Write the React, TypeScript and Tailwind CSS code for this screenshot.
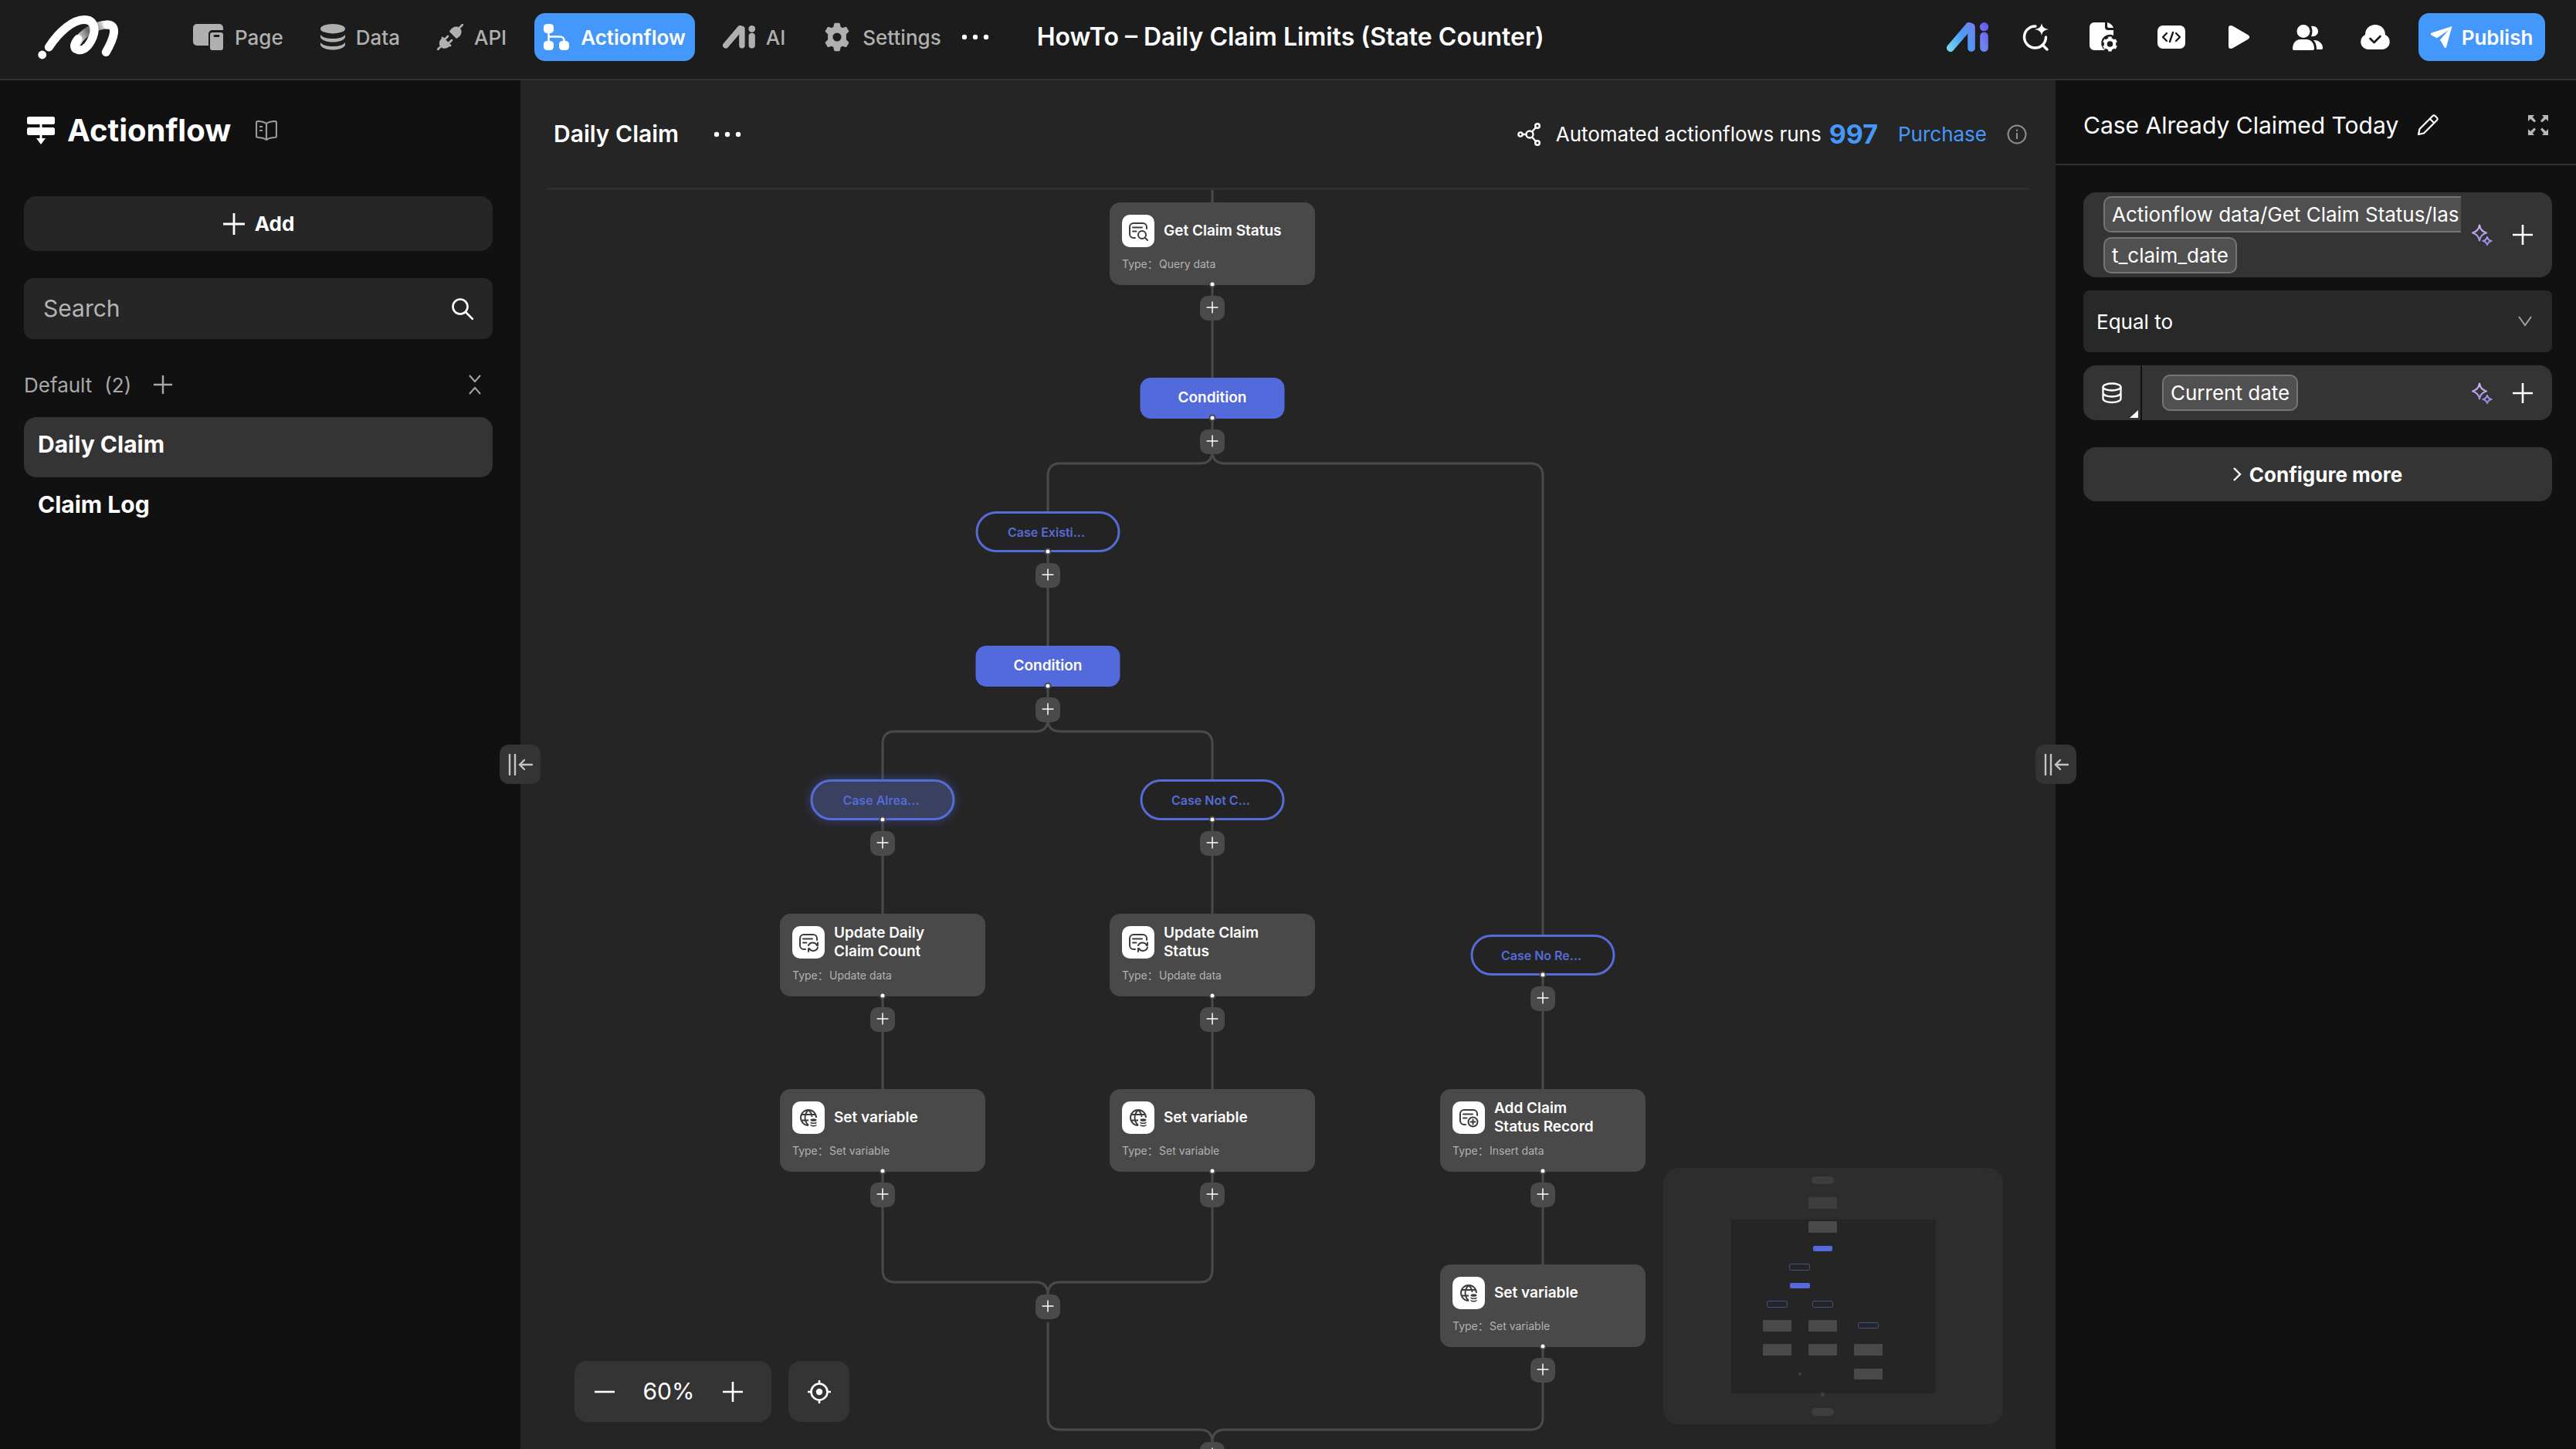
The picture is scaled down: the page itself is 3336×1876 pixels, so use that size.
import type { ReactNode } from "react";

type IconProps = { className?: string };

/* ---------- shared icons ---------- */

function Plus({ className = "size-7" }: IconProps) {
  return (
    <svg viewBox="0 0 28 28" className={className} fill="none" stroke="currentColor" strokeWidth="2.6">
      <path d="M14 1v26M1 14h26" />
    </svg>
  );
}

function Minus({ className = "size-7" }: IconProps) {
  return (
    <svg viewBox="0 0 28 28" className={className} fill="none" stroke="currentColor" strokeWidth="2.6">
      <path d="M1 14h26" />
    </svg>
  );
}

function Dots({ className = "w-9" }: IconProps) {
  return (
    <svg viewBox="0 0 36 8" className={className} fill="currentColor">
      <circle cx="4" cy="4" r="3.2" />
      <circle cx="18" cy="4" r="3.2" />
      <circle cx="32" cy="4" r="3.2" />
    </svg>
  );
}

function Logo() {
  return (
    <svg viewBox="0 0 105 57" className="h-[57px] w-[105px]" fill="none" strokeWidth="11" strokeLinecap="round">
      <defs>
        <linearGradient id="fold" x1="50" y1="36" x2="90" y2="12" gradientUnits="userSpaceOnUse">
          <stop offset="0" stopColor="#fff" />
          <stop offset="0.45" stopColor="#6b6b6b" />
          <stop offset="0.7" stopColor="#8d8d8d" />
          <stop offset="1" stopColor="#fff" />
        </linearGradient>
      </defs>
      <circle cx="5.7" cy="51" r="5.4" fill="#fff" />
      <path d="M50 36C58 22 76 12 90 12" stroke="url(#fold)" />
      <path d="M90 12c14 0 9 17-1.7 35.5" stroke="#fff" />
      <path d="M14.3 41C28 20 46 5.5 60 5.5c14 0 15 13 11 23-5 12-12 17.5-19 16-7-2-5-8 0-14" stroke="#fff" />
    </svg>
  );
}

function PageIcon() {
  return (
    <svg viewBox="0 0 40 34" className="w-10" fill="currentColor">
      <path d="M5 0h29a5 5 0 0 1 5 5v3H25a5 5 0 0 0-5 5v15H5a5 5 0 0 1-5-5V5a5 5 0 0 1 5-5Z" />
      <path
        fillRule="evenodd"
        d="M25 11h11a3 3 0 0 1 3 3v17a3 3 0 0 1-3 3H25a3 3 0 0 1-3-3V14a3 3 0 0 1 3-3Zm3 3a1.5 1.5 0 0 0 0 3h5a1.5 1.5 0 0 0 0-3Z"
      />
    </svg>
  );
}

function DataIcon() {
  return (
    <svg viewBox="0 0 32 34" className="w-8" fill="currentColor">
      <ellipse cx="16" cy="6.2" rx="16" ry="6.2" />
      <path d="M0 14c2 3 8 5 16 5s14-2 16-5v3c-1 4-8 6.5-16 6.5S1 21 0 17Z" />
      <path d="M0 24c2 3 8 5 16 5s14-2 16-5v3c-1 4-8 6.5-16 6.5S1 31 0 27Z" />
    </svg>
  );
}

function PlugIcon() {
  return (
    <svg viewBox="0 0 34 34" className="w-[34px]" fill="currentColor">
      <path d="M17 8c3-4 8-6 12-3s3 9-1 12l-3 2-9-9Z" />
      <path d="m29 5 4-4" stroke="currentColor" strokeWidth="2.5" strokeLinecap="round" />
      <path d="m6 17 11 11c-3 4-9 5-12 2s-3-8 1-11Z" />
      <path d="m7 18 10 10M10 20l4-4M15 25l4-4M4 30l-3 3" stroke="currentColor" strokeWidth="2.8" strokeLinecap="round" />
    </svg>
  );
}

function FlowIcon() {
  return (
    <svg viewBox="0 0 34 34" className="w-[34px]" fill="currentColor">
      <rect x="0" y="0" width="13" height="12" rx="4.5" />
      <rect x="0" y="22" width="13" height="12" rx="4.5" />
      <rect x="20" y="22" width="13" height="12" rx="4.5" />
      <path d="M6.5 11v12M6.5 16.5h15a5 5 0 0 1 5 5V23" fill="none" stroke="currentColor" strokeWidth="2.6" />
    </svg>
  );
}

function AiMark({ className = "w-[42px]", color = "currentColor" }: IconProps & { color?: string }) {
  return (
    <svg viewBox="0 0 54 38" className={className}>
      <defs>
        <linearGradient id="aiGradient" x1="0" y1="38" x2="54" y2="10" gradientUnits="userSpaceOnUse">
          <stop offset="0" stopColor="#7fe0f7" />
          <stop offset="0.45" stopColor="#4b9bf5" />
          <stop offset="0.75" stopColor="#6f83f0" />
          <stop offset="1" stopColor="#6a5cf0" />
        </linearGradient>
      </defs>
      {/* drawn as filled outlines so the gradient also reaches the straight bars */}
      <g fill={color}>
        <path d="M24.7 2.4a5 5 0 0 1 8.6 5.2L9.300 35.600a5 5 0 0 1-8.600-5.200Z" />
        <rect x="27.200" y="1" width="9.600" height="37" rx="4.800" />
        <rect x="43.200" y="12.500" width="10.600" height="25.500" rx="5.300" />
        <circle cx="48.500" cy="5.700" r="5.600" />
      </g>
    </svg>
  );
}

function GearIcon({ className = "w-[38px]" }: IconProps) {
  return (
    <svg viewBox="0 0 24 24" className={className} fill="currentColor">
      <path
        fillRule="evenodd"
        d="M10.2 1h3.600l.8 3 1.700 1 3-.9 1.900 3.200-2.200 2.200v4.800l2.200 2.300-1.900 3.200-3-.9-1.700 1-.8 3.100h-3.600l-.8-3.100-1.700-1-3 .9-1.900-3.200L5 14.300V9.500L2.800 7.300l1.900-3.200 3 .9 1.700-1ZM12 8a4 4 0 1 0 0 8 4 4 0 0 0 0-8Z"
        stroke="currentColor"
        strokeWidth="1"
        strokeLinejoin="round"
      />
    </svg>
  );
}

function SearchSparkIcon() {
  return (
    <svg viewBox="0 0 36 36" className="w-9" fill="none" stroke="currentColor" strokeWidth="3.4" strokeLinecap="round">
      <path d="M18 4a14 14 0 1 0 13.500 14M27 28l6 6" />
      <path d="M26 0c1 5 3 7 9 8-6 1-8 3-9 8-1-5-3-7-9-8 6-1 8-3 9-8Z" fill="currentColor" stroke="none" />
    </svg>
  );
}

function DocGearIcon() {
  return (
    <svg viewBox="0 0 36 38" className="w-9" fill="currentColor">
      <path d="M6 0h14v6a4 4 0 0 0 4 4h7v7a11 11 0 0 0-11 19H6a6 6 0 0 1-6-6V6a6 6 0 0 1 6-6Z" />
      <path d="M23 0c4 1 7 4 8 7h-6a2 2 0 0 1-2-2Z" />
      <circle cx="26.5" cy="28" r="5.8" fill="none" stroke="currentColor" strokeWidth="4" />
      <g stroke="currentColor" strokeWidth="4.5">
        <path d="M26.5 18.500v4M26.500 33.500v4M18.300 23.200l3.400 2M31.300 30.800l3.400 2M34.700 23.200l-3.400 2M21.700 30.800l-3.400 2" />
      </g>
    </svg>
  );
}

function CodeIcon() {
  return (
    <svg viewBox="0 0 36 30" className="w-9">
      <rect width="36" height="30" rx="7" fill="currentColor" />
      <path
        d="m12 10-5 5 5 5M24 10l5 5-5 5M20 9l-4 12"
        fill="none"
        stroke="#1c1c1c"
        strokeWidth="2.4"
        strokeLinecap="round"
        strokeLinejoin="round"
      />
    </svg>
  );
}

function PlayIcon() {
  return (
    <svg viewBox="0 0 28 32" className="w-7" fill="currentColor">
      <path d="M0 4c0-3 3-4 6-2l19 11c3 2 3 4 0 6L6 30c-3 2-6 1-6-2Z" />
    </svg>
  );
}

function UsersIcon() {
  return (
    <svg viewBox="0 0 39 33" className="w-[39px]" fill="currentColor">
      <circle cx="14" cy="8.5" r="8.5" />
      <path d="M0 31c0-7 4-12 10-12h8c6 0 10 5 10 12 0 1.500-1 2-2 2H2c-1 0-2-.5-2-2Z" />
      <path d="M24 2c5-1 9 2 9 6.500S29 16 24 15c2-4 2-9 0-13ZM27 20c8 0 12 5 12 10 0 2-1 2-2 2h-6c0-5-1-9-4-12Z" />
    </svg>
  );
}

function CloudIcon() {
  return (
    <svg viewBox="0 0 40 32" className="w-10">
      <path d="M10 32A10 10 0 0 1 7 13C7 5 13 0 20 0s13 5 13 13a10 10 0 0 1-3 19Z" fill="currentColor" />
      <path d="m13.5 18 5 5 8-8" fill="none" stroke="#1c1c1c" strokeWidth="2.6" strokeLinecap="round" strokeLinejoin="round" />
    </svg>
  );
}

function SendIcon() {
  return (
    <svg viewBox="0 0 28 28" className="w-7" fill="currentColor">
      <path d="M27.5 0 1 8.500c-1.500.6-1.400 2.500 0 3.200l7 3.600L23 5 12 17.500l5.500 9.700c.8 1.300 2.300 1 2.700-.4Z" />
    </svg>
  );
}

function StackFlowIcon() {
  return (
    <svg viewBox="0 0 36 36" className="w-9" fill="currentColor">
      <rect width="36" height="10" rx="2.5" />
      <rect y="14" width="36" height="10" rx="2.5" />
      <path d="M16.5 8h3v20h4.500l-6 8-6-8h4.500Z" />
    </svg>
  );
}

function BookIcon() {
  return (
    <svg viewBox="0 0 28 26" className="w-7" fill="none" stroke="currentColor" strokeWidth="2.2" strokeLinejoin="round">
      <path d="M14 4v21M14 4C11 2 7 1 3 1c-1 0-2 1-2 2v17c0 1 1 2 2 2 4 0 8 1 11 3 3-2 7-3 11-3 1 0 2-1 2-2V3c0-1-1-2-2-2-4 0-8 1-11 3ZM5 8h4M5 13h4" />
    </svg>
  );
}

function SearchIcon() {
  return (
    <svg viewBox="0 0 28 28" className="w-7" fill="none" stroke="currentColor" strokeWidth="2.6" strokeLinecap="round">
      <circle cx="11" cy="11" r="9.5" />
      <path d="m18 18 9 9" />
    </svg>
  );
}

function CollapseIcon() {
  return (
    <svg viewBox="0 0 16 26" className="w-4" fill="none" stroke="currentColor" strokeWidth="2">
      <path d="m1 1 7 8 7-8M1 25l7-8 7 8" />
    </svg>
  );
}

function BranchIcon() {
  return (
    <svg viewBox="0 0 30 30" className="w-[30px]" fill="none" stroke="currentColor" strokeWidth="2.4">
      <circle cx="4" cy="15" r="2.6" />
      <circle cx="16" cy="15" r="4.5" />
      <circle cx="26" cy="4" r="2.8" />
      <circle cx="26" cy="26" r="2.8" />
      <path d="M6.5 15h5M19 11.500l5-5.500M19 18.500l5 5.500" />
    </svg>
  );
}

function InfoIcon() {
  return (
    <svg viewBox="0 0 26 26" className="w-[26px] text-[#8f8f8f]" fill="none" stroke="currentColor" strokeWidth="2">
      <circle cx="13" cy="13" r="11.5" />
      <path d="M13 11v8M13 6.500v2.500" />
    </svg>
  );
}

function PencilIcon() {
  return (
    <svg viewBox="0 0 28 28" className="w-7" fill="none" stroke="currentColor" strokeWidth="2.2" strokeLinejoin="round">
      <path d="m2 26 1.500-7L20 2.500c1.500-1.500 3-1.500 4 0l1.500 1.500c1.500 1.300 1.500 2.700 0 4L9 24.500ZM17 6l5 5" />
    </svg>
  );
}

function ExpandIcon() {
  return (
    <svg viewBox="0 0 26 26" className="w-[26px]" fill="currentColor">
      <path d="M0 0h8L5.800 2.400 10 7.500 8 9.400 3 5 0 8ZM26 0v8l-3-3-5 4.400-2-1.900 4.200-5.100L18 0ZM0 26v-8l3 3 5-4.400 2 1.900-4.200 5.100L8 26ZM26 26h-8l2.200-2.400-4.200-5.100 2-1.900 5 4.400 3-3Z" />
    </svg>
  );
}

function SparklesIcon() {
  return (
    <svg viewBox="0 0 28 28" className="w-7" fill="none" stroke="url(#sparkle)" strokeWidth="2.1" strokeLinejoin="round">
      <defs>
        <linearGradient id="sparkle" x1="0" y1="0" x2="0" y2="28" gradientUnits="userSpaceOnUse">
          <stop offset="0" stopColor="#d3b8f0" />
          <stop offset="1" stopColor="#8f86e0" />
        </linearGradient>
      </defs>
      <path d="M11 1.500c1 6 3.500 8.500 9 10-5.500 1.500-8 4-9 10-1-6-3.500-8.500-9-10 5.500-1.500 8-4 9-10Z" />
      <path d="M21 17c.8 3 2.200 4.200 5.500 5-3.300.8-4.700 2-5.500 5-.8-3-2.200-4.200-5.500-5 3.300-.8 4.700-2 5.500-5Z" />
    </svg>
  );
}

function DatabaseIcon() {
  return (
    <svg viewBox="0 0 26 28" className="w-[26px]" fill="none" stroke="currentColor" strokeWidth="2.3">
      <ellipse cx="13" cy="6" rx="11.5" ry="4.5" />
      <path d="M1.5 6v15c0 3 5 5 11.500 5s11.500-2 11.500-5V6M1.500 13.500c0 3 5 5 11.500 5s11.500-2 11.500-5" />
    </svg>
  );
}

function TargetIcon() {
  return (
    <svg viewBox="0 0 32 32" className="w-8" fill="none" stroke="currentColor" strokeWidth="2.6">
      <circle cx="16" cy="16" r="10.5" />
      <circle cx="16" cy="16" r="4.2" fill="currentColor" stroke="none" />
      <path d="M16 1v5M16 26v5M1 16h5M26 16h5" />
    </svg>
  );
}

/* ---------- node icons ---------- */

type NodeIcon = "query" | "update" | "insert" | "variable";

function NodeGlyph({ kind }: { kind: NodeIcon }) {
  if (kind === "variable") {
    return (
      <svg viewBox="0 0 24 24" className="size-6" fill="none" stroke="#3c3c3c" strokeWidth="1.9">
        <path d="M22 12A10 10 0 1 0 12 22M3.500 8h17M3.500 15.500H12M12 2c-3 3-4.500 6-4.500 10S9 19 12 22M12 2c3 3 4.500 6 4.500 9" />
        <g fill="#3c3c3c" stroke="none">
          <ellipse cx="18.5" cy="15" rx="4" ry="1.8" />
          <path d="M14.5 17.300c2 1.600 6 1.600 8 0v1.600c-2 1.600-6 1.600-8 0ZM14.500 20.700c2 1.600 6 1.600 8 0v1.600c-2 1.600-6 1.600-8 0Z" />
        </g>
      </svg>
    );
  }
  return (
    <svg viewBox="0 0 26 26" className="size-[26px]" fill="none" stroke="#3c3c3c" strokeWidth="2" strokeLinecap="round">
      <path d="M9 22H7a5 5 0 0 1-5-5V8a5 5 0 0 1 5-5h12a5 5 0 0 1 5 5v2M6 8.500h12M6 13.500h4.500" />
      {kind === "query" && (
        <>
          <circle cx="18" cy="18" r="5" />
          <path d="m22 22 3 3" />
        </>
      )}
      {kind === "update" && <path d="M13 17a6 6 0 0 1 11 0M25 19.500a6 6 0 0 1-11 1.500M25 13.500V17M13 25v-4" />}
      {kind === "insert" && (
        <>
          <circle cx="18.5" cy="18.5" r="6" />
          <path d="M18.5 15.500v6M15.500 18.500h6" />
        </>
      )}
    </svg>
  );
}

/* ---------- header ---------- */

const navItems = [
  { label: "Page", icon: <PageIcon /> },
  { label: "Data", icon: <DataIcon /> },
  { label: "API", icon: <PlugIcon /> },
  { label: "Actionflow", icon: <FlowIcon />, active: true },
  { label: "AI", icon: <AiMark /> },
  { label: "Settings", icon: <GearIcon /> },
];

const toolbar = [
  { label: "AI assistant", icon: <AiMark className="w-[54px]" color="url(#aiGradient)" /> },
  { label: "Smart search", icon: <SearchSparkIcon /> },
  { label: "Page settings", icon: <DocGearIcon /> },
  { label: "Code", icon: <CodeIcon /> },
  { label: "Preview", icon: <PlayIcon /> },
  { label: "Members", icon: <UsersIcon /> },
  { label: "Saved", icon: <CloudIcon /> },
];

function Header() {
  return (
    <header className="flex h-[104px] shrink-0 items-center border-b-2 border-[#303030] bg-[#1c1c1c] pr-10 pb-1.5 pl-[49px]">
      <Logo />
      <nav className="ml-[84px] flex items-center gap-6">
        {navItems.map((item) => (
          <button
            key={item.label}
            className={
              item.active
                ? "flex h-[62px] items-center gap-3.5 rounded-[14px] bg-[#4598fb] px-3 text-[26px] font-semibold text-white"
                : "flex h-[62px] items-center gap-3.5 px-3 text-[26px] font-medium text-[#b0b0b0]"
            }
          >
            {item.icon}
            {item.label}
          </button>
        ))}
      </nav>
      <button aria-label="More" className="ml-3.5 text-white">
        <Dots />
      </button>
      <h1 className="ml-[62px] text-[32px] font-semibold whitespace-nowrap text-white">
        HowTo – Daily Claim Limits (State Counter)
      </h1>
      <div className="ml-auto flex items-center text-white">
        {toolbar.map((tool) => (
          <button key={tool.label} aria-label={tool.label} className="flex w-[88px] items-center justify-center">
            {tool.icon}
          </button>
        ))}
        <button className="ml-3 flex h-[62px] w-[164px] items-center justify-center gap-3 rounded-[14px] bg-[#4598fb] text-[26px] font-semibold">
          <SendIcon />
          Publish
        </button>
      </div>
    </header>
  );
}

/* ---------- left panel ---------- */

const flows = [
  { name: "Daily Claim", selected: true },
  { name: "Claim Log", selected: false },
];

function Sidebar() {
  return (
    <aside className="w-[674px] shrink-0 bg-[#111111] pr-9 pl-[31px] text-white">
      <div className="flex h-[130px] items-center pl-1">
        <StackFlowIcon />
        <h2 className="ml-4 text-[40px] font-bold">Actionflow</h2>
        <button aria-label="Documentation" className="ml-8 text-[#9a9a9a]">
          <BookIcon />
        </button>
      </div>

      <button className="mt-5 flex h-[71px] w-full items-center justify-center gap-3 rounded-2xl bg-[#262626] text-[26px] font-bold">
        <Plus className="size-[30px]" />
        Add
      </button>

      <label className="mt-[35px] flex h-[79px] items-center rounded-xl bg-[#262626] px-[25px]">
        <input
          type="text"
          aria-label="Search"
          placeholder="Search"
          className="min-w-0 flex-1 bg-transparent text-[30px] placeholder-[#b4b4b4] outline-none"
        />
        <SearchIcon />
      </label>

      <div className="mt-9 flex h-[46px] items-center text-[26px] text-[#a8a8a8]">
        <span>Default</span>
        <span className="ml-4">(2)</span>
        <button aria-label="Add to group" className="ml-7">
          <Plus className="size-[26px]" />
        </button>
        <button aria-label="Collapse group" className="mr-[15px] ml-auto">
          <CollapseIcon />
        </button>
      </div>

      <ul className="mt-[19px]">
        {flows.map((flow) => (
          <li key={flow.name}>
            <button
              className={
                flow.selected
                  ? "flex h-[78px] w-full items-center rounded-2xl bg-[#343434] px-[18px] pb-2 text-[30px] font-bold"
                  : "flex h-[78px] w-full items-center px-[18px] pb-2 text-[30px] font-bold"
              }
            >
              {flow.name}
            </button>
          </li>
        ))}
      </ul>
    </aside>
  );
}

function PanelHandle({ label, className }: { label: string; className: string }) {
  return (
    <button
      aria-label={label}
      className={`absolute top-[860px] z-10 flex h-[51px] w-[53px] items-center justify-center rounded-xl bg-[#343434] text-[#c4c4c4] ${className}`}
    >
      <svg viewBox="0 0 32 28" className="w-8" fill="none" stroke="currentColor" strokeWidth="2.4" strokeLinecap="round">
        <path d="M2 1v26M9 1v26M31 14H16M21 8l-6 6 6 6" />
      </svg>
    </button>
  );
}

/* ---------- flow canvas ---------- */

// Column centres on the canvas
const COL = [469, 683, 896, 1324];

type FlowNode = {
  kind: "card" | "condition" | "case";
  x: number;
  y: number;
  title: string;
  type?: string;
  icon?: NodeIcon;
  selected?: boolean;
};

const nodes: FlowNode[] = [
  { kind: "card", x: COL[2], y: 16, title: "Get Claim Status", type: "Query data", icon: "query" },
  { kind: "condition", x: COL[2], y: 243, title: "Condition" },
  { kind: "case", x: COL[1], y: 416, title: "Case Existi..." },
  { kind: "condition", x: COL[1], y: 590, title: "Condition" },
  { kind: "case", x: COL[0], y: 763, title: "Case Alrea...", selected: true },
  { kind: "case", x: COL[2], y: 763, title: "Case Not C..." },
  { kind: "card", x: COL[0], y: 937, title: "Update Daily Claim Count", type: "Update data", icon: "update" },
  { kind: "card", x: COL[2], y: 937, title: "Update Claim Status", type: "Update data", icon: "update" },
  { kind: "case", x: COL[3], y: 964, title: "Case No Re..." },
  { kind: "card", x: COL[0], y: 1164, title: "Set variable", type: "Set variable", icon: "variable" },
  { kind: "card", x: COL[2], y: 1164, title: "Set variable", type: "Set variable", icon: "variable" },
  { kind: "card", x: COL[3], y: 1164, title: "Add Claim Status Record", type: "Insert data", icon: "insert" },
  { kind: "card", x: COL[3], y: 1391, title: "Set variable", type: "Set variable", icon: "variable" },
];

const merges = [
  { x: COL[1], y: 1430 },
  { x: COL[2], y: 1621 },
];

const nodeHeight = (node: FlowNode) => (node.kind === "card" ? 107 : 53);

function AddStep({ x, y }: { x: number; y: number }) {
  return (
    <button
      aria-label="Add step"
      className="absolute flex size-8 -translate-x-1/2 items-center justify-center rounded-[10px] bg-[#4a4a4a] pb-0.5 text-white"
      style={{ left: x, top: y }}
    >
      <Plus className="size-4" />
    </button>
  );
}

function NodeView({ node }: { node: FlowNode }) {
  const pos = { left: node.x, top: node.y };

  if (node.kind === "condition") {
    return (
      <div
        className="absolute flex h-[53px] w-[187px] -translate-x-1/2 items-center justify-center rounded-[14px] bg-[#526adb] text-[19px] font-semibold text-white"
        style={pos}
      >
        {node.title}
      </div>
    );
  }

  if (node.kind === "case") {
    return (
      <div
        className={`absolute flex h-[53px] w-[187px] -translate-x-1/2 items-center justify-center rounded-full border-[3px] border-[#556cd6] pr-1 text-[16px] font-semibold text-[#556cd6] ${
          node.selected ? "bg-[#3a405f] shadow-[0_0_14px_rgba(82,106,219,0.45)]" : "bg-[#232323]"
        }`}
        style={pos}
      >
        {node.title}
      </div>
    );
  }

  return (
    <div
      className="absolute flex h-[107px] w-[266px] -translate-x-1/2 flex-col rounded-[14px] bg-[#494949] px-4 pt-[15px]"
      style={pos}
    >
      <div className="flex h-[43px] items-center gap-3">
        <span className="flex size-[42px] shrink-0 items-center justify-center rounded-[10px] bg-white">
          {node.icon && <NodeGlyph kind={node.icon} />}
        </span>
        <span className="w-[156px] text-[19px] leading-6 font-semibold text-white">{node.title}</span>
      </div>
      <div className="mt-2.5 flex text-[14px] leading-6 text-[#b2b2b2]">
        <span className="w-12">Type：</span>
        <span>{node.type}</span>
      </div>
    </div>
  );
}

function Connectors() {
  return (
    <svg className="absolute inset-0 size-full" fill="none" stroke="#4a4a4a" strokeWidth="3">
      <path d="M896 0V338" />
      <path d="M896 338q0 16-16 16H699q-16 0-16 16V685" />
      <path d="M896 338q0 16 16 16H1308q16 0 16 16V1589q0 16-16 16H912q-16 0-16 16" />
      <path d="M683 685q0 16-16 16H485q-16 0-16 16V1398q0 16 16 16H667q16 0 16 16" />
      <path d="M683 685q0 16 16 16H880q16 0 16 16V1398q0 16-16 16H699q-16 0-16 16" />
      <path d="M683 1466V1589q0 16 16 16H880q16 0 16 16" />
    </svg>
  );
}

function MiniMap() {
  return (
    <div className="absolute right-[68px] bottom-8 h-[332px] w-[440px] overflow-hidden rounded-[20px] bg-[#2d2d2d]">
      <svg viewBox="0 0 440 332" className="size-full">
        <rect x="88" y="67" width="265" height="225" fill="#252525" />
        <g fill="#3d3d3d">
          <rect x="192" y="11" width="29" height="10" rx="5" />
          <rect x="188" y="38" width="37" height="15" rx="1" />
          <rect x="192" y="311" width="29" height="10" rx="5" />
          <rect x="204" y="291" width="5" height="5" rx="1" />
          <circle cx="177" cy="267" r="2.2" />
        </g>
        <g fill="#494949">
          <rect x="188" y="69" width="37" height="15" rx="1" />
          <rect x="129" y="197" width="37" height="15" rx="1" />
          <rect x="188" y="197" width="37" height="15" rx="1" />
          <rect x="129" y="228" width="37" height="15" rx="1" />
          <rect x="188" y="228" width="37" height="15" rx="1" />
          <rect x="247" y="228" width="37" height="15" rx="1" />
          <rect x="247" y="260" width="37" height="14" rx="1" />
        </g>
        <g fill="#566ade">
          <rect x="194" y="101" width="25" height="7" rx="2" />
          <rect x="164" y="149" width="26" height="7" rx="2" />
        </g>
        <g fill="none" stroke="#474f94">
          <rect x="163.5" y="124.5" width="26" height="8" rx="2" />
          <rect x="134.5" y="172.5" width="26" height="8" rx="2" />
          <rect x="193.5" y="172.5" width="26" height="8" rx="2" />
          <rect x="252.5" y="200.5" width="26" height="7" rx="2" />
        </g>
      </svg>
    </div>
  );
}

function ZoomControls() {
  return (
    <div className="absolute bottom-[35px] left-[70px] flex gap-[22px] text-white">
      <div className="flex h-[79px] w-[255px] items-center justify-between rounded-2xl bg-[#343434] pr-9 pl-[25px]">
        <button aria-label="Zoom out">
          <Minus />
        </button>
        <span className="text-[30px]">60%</span>
        <button aria-label="Zoom in">
          <Plus />
        </button>
      </div>
      <button aria-label="Centre view" className="flex size-[79px] items-center justify-center rounded-2xl bg-[#343434]">
        <TargetIcon />
      </button>
    </div>
  );
}

function Canvas() {
  return (
    <main className="flex min-w-0 flex-1 flex-col bg-[#252525]">
      <div className="mx-[34px] flex h-[142px] shrink-0 items-center border-b-[3px] border-[#303030] px-[9px] text-[26px] text-white">
        <h2 className="text-[30px] font-semibold">Daily Claim</h2>
        <button aria-label="Flow options" className="ml-[45px]">
          <Dots />
        </button>
        <div className="ml-auto flex items-center">
          <BranchIcon />
          <span className="ml-5">Automated actionflows runs</span>
          <span className="ml-2.5 text-[34px] leading-10 font-bold text-[#4598fb]">997</span>
          <a href="#purchase" className="ml-[26px] text-[#4598fb]">
            Purchase
          </a>
          <button aria-label="About runs" className="ml-[26px] -mr-1.5">
            <InfoIcon />
          </button>
        </div>
      </div>

      <div className="relative flex-1 overflow-hidden">
        <Connectors />
        {nodes.map((node, i) => (
          <NodeView key={i} node={node} />
        ))}
        {nodes.map((node, i) => (
          <AddStep key={i} x={node.x} y={node.y + nodeHeight(node) + 14} />
        ))}
        {nodes.map((node, i) => (
          <span
            key={i}
            className="absolute size-[9px] -translate-1/2 rounded-full border-2 border-[#4a4a4a] bg-white"
            style={{ left: node.x, top: node.y + nodeHeight(node) - 1 }}
          />
        ))}
        {merges.map((merge, i) => (
          <AddStep key={i} x={merge.x} y={merge.y} />
        ))}
        <ZoomControls />
        <MiniMap />
      </div>
    </main>
  );
}

/* ---------- right panel ---------- */

function FieldActions({ name }: { name: string }) {
  return (
    <div className="flex shrink-0 items-center gap-[25px] pr-6 pl-[13px] text-white">
      <button aria-label={`Generate ${name}`}>
        <SparklesIcon />
      </button>
      <button aria-label={`Pick ${name}`}>
        <Plus />
      </button>
    </div>
  );
}

function Chip({ children, className = "rounded-[10px] border-2" }: { children: ReactNode; className?: string }) {
  return (
    <span
      className={`flex h-[47px] w-fit items-center border-[#757575] bg-[#505050] px-[9px] text-[26px] whitespace-nowrap text-white ${className}`}
    >
      {children}
    </span>
  );
}

function Inspector() {
  return (
    <aside className="w-[674px] shrink-0 bg-[#111111]">
      <div className="flex h-[110px] items-center border-b-2 border-[#303030] px-9 pt-2 text-white">
        <h2 className="text-[30px]">Case Already Claimed Today</h2>
        <button aria-label="Rename" className="ml-6">
          <PencilIcon />
        </button>
        <button aria-label="Expand panel" className="ml-auto text-[#b8b8b8]">
          <ExpandIcon />
        </button>
      </div>

      <div className="flex flex-col pt-[35px] pr-[31px] pl-9">
        <div className="flex h-[110px] items-center rounded-2xl bg-[#343434]">
          <div className="flex min-w-0 flex-1 flex-col gap-1.5 pl-[26px]">
            <Chip className="w-full rounded-l-[10px] border-y-2 border-l-2 pr-0">Actionflow data/Get Claim Status/las</Chip>
            <Chip>t_claim_date</Chip>
          </div>
          <FieldActions name="left value" />
        </div>

        <div className="relative mt-[17px] flex h-20 items-center">
          <select
            aria-label="Operator"
            className="size-full appearance-none rounded-lg bg-[#282828] px-[17px] text-[26px] text-white"
          >
            <option>Equal to</option>
          </select>
          <svg
            viewBox="0 0 18 14"
            className="pointer-events-none absolute right-[26px] w-[18px]"
            fill="none"
            stroke="#a0a0a0"
            strokeWidth="2"
          >
            <path d="m1 1 8 11 8-11" />
          </svg>
        </div>

        <div className="mt-[17px] flex h-[71px] gap-0.5 overflow-hidden rounded-2xl">
          <button aria-label="Value source" className="relative flex w-[74px] items-center justify-center bg-[#343434] text-white">
            <DatabaseIcon />
            <svg viewBox="0 0 11 10" className="absolute right-[3px] bottom-[3px] w-[11px]" fill="currentColor">
              <path d="M11 0v10H0Z" />
            </svg>
          </button>
          <div className="flex flex-1 items-center justify-between bg-[#343434] pl-[26px]">
            <Chip>Current date</Chip>
            <FieldActions name="right value" />
          </div>
        </div>

        <button className="mt-[35px] flex h-[70px] items-center justify-center gap-2.5 rounded-2xl bg-[#343434] text-[26px] font-bold text-white">
          <svg viewBox="0 0 11 18" className="w-[11px]" fill="none" stroke="currentColor" strokeWidth="2.4">
            <path d="m1 1 8 8-8 8" />
          </svg>
          Configure more
        </button>
      </div>
    </aside>
  );
}

export default function App() {
  return (
    <div className="flex h-screen flex-col overflow-hidden bg-[#111111] font-['Inter','Noto_Sans_CJK_SC',sans-serif]">
      <Header />
      <div className="relative flex min-h-0 flex-1">
        <Sidebar />
        <Canvas />
        <Inspector />
        <PanelHandle label="Collapse left panel" className="left-[647px]" />
        <PanelHandle label="Collapse right panel" className="right-[647px]" />
      </div>
    </div>
  );
}
